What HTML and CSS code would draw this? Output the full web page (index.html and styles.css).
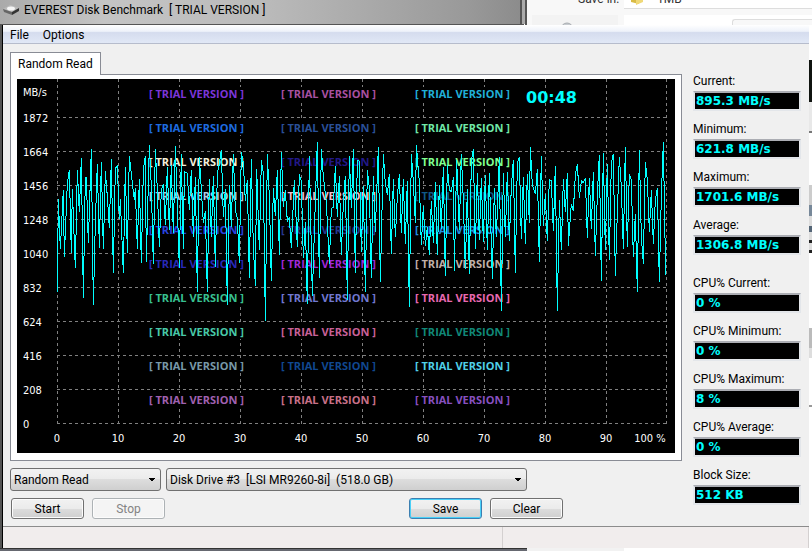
FILE: index.html
```html
<!DOCTYPE html>
<html lang="en">
<head>
<meta charset="utf-8">
<title>EVEREST Disk Benchmark</title>
<link rel="stylesheet" href="styles.css">
</head>
<body>
<div class="desktop">
  <header class="top">
    <div class="titlebar">
      <svg class="drive" viewBox="0 0 16 12" width="16" height="12" aria-hidden="true">
        <path d="M0 5L7 1L16 4L9 9Z" fill="#bbb"/><path d="M0 5L9 8V11L1 8Z" fill="#666"/><path d="M9 8L16 4V7L9 11Z" fill="#333"/><ellipse cx="8" cy="4.500" rx="4" ry="2" fill="#f4f4f4"/>
      </svg>
      <h1 class="title">EVEREST Disk Benchmark&nbsp; [ TRIAL VERSION ]</h1>
    </div>
    <div class="behind">
      <div class="behind-nav">
        <span class="behind-text behind-label">Save in:</span>
        <div class="behind-places"><svg viewBox="0 0 14 14" width="14" height="14" aria-hidden="true"><circle cx="7" cy="7" r="6" fill="#c8ccd0" stroke="#a8acb0"/></svg></div>
      </div>
      <div class="behind-main">
        <div class="behind-field"><svg viewBox="0 0 14 16" width="14" height="16" aria-hidden="true"><path d="M1 1H9V15L1 13Z" fill="#d9bb45"/><path d="M6 3L13 1V13L6 16Z" fill="#f0d978"/></svg><span class="behind-text">1MB</span></div>
        <div class="behind-list"><div class="behind-box"></div></div>
      </div>
    </div>
  </header>

  <main class="window">
    <nav class="menu"><a href="#file">File</a><a href="#options">Options</a></nav>
    <div class="content">
      <div class="left">
        <div class="tabs"><button class="tab" type="button">Random Read</button></div>
        <div class="panel">
          <svg class="plot" viewBox="0 0 658 374" role="img" aria-label="Random read speed">
            <rect width="658" height="374" fill="#000"/>
            <path id="grid" class="grid"/>
            <g id="marks" class="mark"></g>
            <g id="axis" class="axis"></g>
            <text class="clock" x="509" y="24">00:48</text>
            <g class="wave">
              <polyline transform="translate(33 51) scale(.33333)" points="22,485 25,207 31,358 40,180 43,380 49,235 52,160 58,120 64,368 67,178 76,415 82,120 88,247 94,85 100,503 106,142 109,142 115,340 124,57 130,524 136,280 142,102 148,353 154,96 160,358 166,124 172,200 178,293 184,88 190,430 196,115 202,108 208,268 211,208 220,428 226,112 232,368 238,78 247,160 253,210 256,175 262,356 268,148 274,400 280,120 286,78 289,395 298,45 304,170 310,403 316,57 322,180 328,352 334,180 340,163 346,285 352,110 358,300 364,105 370,308 376,48 388,415 394,72 400,358 403,125 412,130 418,240 424,120 430,320 436,142 442,485 448,82"/>
              <polyline transform="translate(183 51) scale(.33333)" points="-2,82 4,178 10,278 16,243 22,485 28,148 34,320 40,138 46,412 52,130 58,102 64,60 70,260 76,178 82,524 88,165 94,290 100,72 106,240 112,265 118,400 124,66 130,100 136,212 142,150 148,443 154,88 160,350 166,467 170,117 178,360 184,90 190,130 196,572 202,72 208,200 214,452 220,175 226,258 232,120 238,374 244,66 250,230 256,180 262,275 268,262 274,353 283,150 292,350 298,132 304,155 310,385 316,277 322,521 328,78 337,497 346,215 352,36 358,443 364,57 370,140 379,215 388,402 394,235 400,232 406,108 412,262 418,138 424,374 430,220 436,138 442,509 448,78 454,235"/>
              <polyline transform="translate(333 51) scale(.33333)" points="4,235 10,57 16,428 22,90 28,93 34,365 40,168 46,485 52,120 58,175 64,443 70,138 76,305 85,51 91,455 100,72 106,160 112,195 118,132 124,371 130,147 136,322 142,200 148,132 154,308 160,147 166,342 172,153 178,530 184,72 190,155 196,278 199,45 208,155 214,345 220,228 226,348 232,292 238,374 244,212 250,340 256,156 262,376 268,165 274,298 280,112 286,437 292,105 298,180 304,185 310,142 313,422 320,90 328,300 334,72 340,210 346,418 352,178 358,431 364,95 370,57 376,356 382,130 388,331 394,145 400,335 406,135 412,360 418,130 427,448 433,175 439,320 448,82 454,542"/>
              <polyline transform="translate(483 51) scale(.33333)" points="4,542 10,130 16,322 22,126 28,332 34,170 40,90 46,428 52,100 58,82 64,328 70,142 76,341 82,132 88,278 91,51 97,165 106,192 112,118 118,395 124,78 130,287 136,192 142,334 148,148 154,153 160,302 166,108 172,542 178,210 184,359 190,147 196,245 202,129 205,347 214,222 220,242 226,135 232,102 238,203 244,153 250,158 256,145 262,323 268,144 274,297 280,126 286,377 292,195 298,75 304,452 310,69 316,360 322,102 328,389 334,100 340,72 346,437 352,250 358,82 364,170 370,356 376,51 382,350 388,132 394,150 400,380 406,252 412,485 418,60 424,320 430,401 436,96 442,150 448,305 454,180 460,341 466,210 472,175 478,455 484,200 490,36 497,434"/>
            </g>
          </svg>
        </div>
        <div class="choices">
          <select class="combo combo-test" aria-label="Test"><option>Random Read</option></select>
          <select class="combo combo-drive" aria-label="Drive"><option>Disk Drive #3&nbsp; [LSI MR9260-8i]&nbsp; (518.0 GB)</option></select>
        </div>
        <div class="actions">
          <button class="btn" type="button">Start</button>
          <button class="btn" type="button" disabled>Stop</button>
          <button class="btn btn-default" type="button">Save</button>
          <button class="btn" type="button">Clear</button>
        </div>
      </div>
      <aside class="stats">
        <div class="stat"><label for="cur">Current:</label><input id="cur" readonly value="895.3 MB/s"></div>
        <div class="stat"><label for="min">Minimum:</label><input id="min" readonly value="621.8 MB/s"></div>
        <div class="stat"><label for="max">Maximum:</label><input id="max" readonly value="1701.6 MB/s"></div>
        <div class="stat"><label for="avg">Average:</label><input id="avg" readonly value="1306.8 MB/s"></div>
        <div class="stat stat-group"><label for="ccur">CPU% Current:</label><input id="ccur" readonly value="0 %"></div>
        <div class="stat"><label for="cmin">CPU% Minimum:</label><input id="cmin" readonly value="0 %"></div>
        <div class="stat"><label for="cmax">CPU% Maximum:</label><input id="cmax" readonly value="8 %"></div>
        <div class="stat"><label for="cavg">CPU% Average:</label><input id="cavg" readonly value="0 %"></div>
        <div class="stat"><label for="blk">Block Size:</label><input id="blk" readonly value="512 KB"></div>
      </aside>
    </div>
    <footer class="status"><div class="status-main"></div><div class="status-side"></div></footer>
  </main>
  <div class="bottom"><div class="bottom-frame"></div><div class="bottom-rest"></div></div>
</div>
<script src="chart.js"></script>
</body>
</html>
```
FILE: styles.css
```css
* { box-sizing: border-box; }
body {
  margin: 0;
  background: #fff;
  color: #000;
  font: 12px/16px Roboto, "Open Sans", sans-serif;
}
.desktop {
  overflow: hidden;
  background: linear-gradient(#fff 60px, #101410 60px 102px, #e8e8e8 102px 131px, #777 131px 133px, #fff 133px 185px, #ccc 185px 205px, #789 205px 216px, #ddd 216px 226px, #567 226px 232px, #ddd 232px 240px, #222 240px 243px, #ddd 243px 250px, #222 250px 253px, #fff 253px 328px, #bbb 328px 348px, #ddd 348px 358px, #fff 358px 405px, #999 405px 407px, #fff 407px);
}
.top { display: grid; grid-template-columns: minmax(0, 527fr) minmax(0, 285fr); height: 25px; }
.titlebar {
  display: flex;
  align-items: flex-start;
  gap: 5px;
  padding: 2px 0 0 3px;
  background: linear-gradient(90deg, #aaa, #c4c4c4 20%, #bbb 50%, #999 90%, #8c8c8c);
  border-right: 7px double #555;
  border-bottom: 1px solid #555;
}
.drive { margin-top: 2px; }
.title { margin: 0; font-size: 12px; font-weight: 400; line-height: 16px; white-space: nowrap; }
.behind { display: grid; grid-template-columns: minmax(0, 97fr) minmax(0, 188fr); background: #f8f8f8; overflow: hidden; }
.behind-nav { overflow: hidden; }
.behind-label { padding-left: 51px; }
.behind-places { height: 10px; margin: 8px 6px 0 5px; padding: 7px 0 0 28px; background: #f3f3f3; overflow: hidden; }
.behind-places svg { display: block; }
.behind-text { display: block; height: 16px; line-height: 16px; margin-top: -9px; color: #333; white-space: nowrap; }
.behind-field { display: flex; gap: 13px; height: 9px; padding-left: 6px; background: #fff; border-bottom: 1px solid #ddd; overflow: hidden; }
.behind-field svg { flex: none; margin-top: -11px; }
.behind-list { height: 10px; margin-top: 6px; padding: 4px 0 0 108px; background: #fff; }
.behind-box { height: 6px; border: 1px solid #ddd; border-width: 1px 0 0 1px; border-radius: 3px 0 0; background: #f8f8f8; }

.window { margin-right: 3px; border-left: 3px solid #555; border-left-style: ridge; background: #f0f0f0; }
.menu {
  display: flex;
  gap: 14px;
  height: 19px;
  padding: 2px 7px 0;
  background: linear-gradient(#fff, #eef2fa 35%, #d5dcee 42%, #e1e8f6);
  border-bottom: 1px solid #b6bccc;
}
.menu a { color: #000; text-decoration: none; }
.content { display: flex; gap: 11px; padding: 8px 8px 7px 7px; }
.left { flex: 1; min-width: 0; }
.tabs { display: flex; height: 22px; }
.tab {
  position: relative;
  height: 23px;
  padding: 0 7px 1px;
  border: 1px solid #898c95;
  border-bottom: 0;
  background: #fff;
  font: inherit;
}
.panel { padding: 4px 6px 7px; border: 1px solid #898c95; background: #fff; }
.plot { display: block; width: 100%; height: auto; }
.grid { fill: none; stroke: #808080; stroke-dasharray: 3 3; shape-rendering: crispEdges; }
.axis { fill: #fff; font: 11px "DejaVu Sans Condensed", "DejaVu Sans", sans-serif; }
.axis .x { text-anchor: middle; }
.mark { font: bold 11px "Open Sans", "Noto Sans", sans-serif; }
.clock { fill: #0ff; font: bold 16px "DejaVu Sans", sans-serif; }
.wave { fill: none; stroke: #0ff; shape-rendering: crispEdges; }
.wave polyline { vector-effect: non-scaling-stroke; }

.choices { display: flex; gap: 5px; margin-top: 7px; }
.combo {
  appearance: none;
  height: 23px;
  padding: 0 20px 0 3px;
  border: 1px solid #707070;
  border-radius: 3px;
  background:
    linear-gradient(225deg, #000 50%, transparent 50%) right 8px top 9px / 4px 4px no-repeat,
    linear-gradient(135deg, #000 50%, transparent 50%) right 4px top 9px / 4px 4px no-repeat,
    linear-gradient(#f2f2f2, #ebebeb 50%, #ddd 50%, #cfcfcf);
  color: #000;
  font: inherit;
}
.combo-test { width: 151px; }
.combo-drive { width: 361px; }
.actions { display: flex; gap: 8px; margin-top: 7px; padding-left: 1px; }
.btn {
  width: 73px;
  height: 21px;
  padding: 0;
  border: 1px solid #707070;
  border-radius: 3px;
  background: linear-gradient(#f2f2f2, #ebebeb 50%, #ddd 50%, #cfcfcf);
  box-shadow: inset 0 0 0 1px #fcfcfc;
  color: #000;
  font: inherit;
}
.btn:disabled { border-color: #adb2b5; background: #f4f4f4; color: #838383; }
.btn-default { margin-left: 236px; border-color: #3c7fb1; box-shadow: inset 0 0 0 1px #48d0f8; }

.stats { width: 108px; padding-top: 21px; }
.stat { margin-bottom: 10px; }
.stat-group { margin-top: 20px; }
.stat label { display: block; height: 18px; white-space: nowrap; }
.stat input {
  display: block;
  width: 100%;
  height: 20px;
  padding: 0 0 0 1px;
  border: 2px solid #e3e6ea;
  border-top-color: #abadb3;
  outline: 0;
  background: #000;
  color: #0ff;
  font: bold 12px "DejaVu Sans", sans-serif;
}
.status { display: flex; height: 22px; border-top: 1px solid #8c8c8c; background: #f1eded; }
.status-main { flex: 500 1 0; border-right: 1px solid #d4d0d0; }
.status-side { flex: 306 1 0; border-right: 1px solid #d4d0d0; }
.bottom { display: flex; height: 3px; }
.bottom-frame { flex: 527 1 0; background: #666870; border-top: 1px solid #333; }
.bottom-rest { flex: 285 1 0; background: linear-gradient(90deg, #f2f2f2 34%, #fff 34%); }
```
FILE: chart.js
```js
const NS = "http://www.w3.org/2000/svg";
const add = (parent, text, x, y, cls, fill) => {
  const t = document.createElementNS(NS, "text");
  t.setAttribute("x", x);
  t.setAttribute("y", y);
  if (cls) t.setAttribute("class", cls);
  if (fill) t.setAttribute("fill", fill);
  t.textContent = text;
  parent.append(t);
};
// Opaque backing that hides the grid behind a mark
const back = (parent, x, y) => {
  const r = document.createElementNS(NS, "rect");
  r.setAttribute("x", x);
  r.setAttribute("y", y);
  r.setAttribute("width", 92);
  r.setAttribute("height", 14);
  parent.append(r);
};
const rows = [38, 72, 106, 140, 174, 208, 242, 276, 310, 344];
const cols = [40, 101, 162, 223, 284, 345, 406, 467, 528, 589, 649];
document.getElementById("grid").setAttribute("d",
  rows.map(y => `M40 ${y}.5H650`).join("") + cols.map(x => `M${x}.5 0V345`).join(""));

const axis = document.getElementById("axis");
add(axis, "MB/s", 6, 17);
[1872, 1664, 1456, 1248, 1040, 832, 624, 416, 208, 0].forEach((v, i) => add(axis, v, 6, 43 + 34 * i));
cols.forEach((x, i) => add(axis, i === 10 ? "100 %" : i * 10, i === 10 ? 633 : x, 363, "x"));

const marks = document.getElementById("marks");
const colors = [
  [132, ["#7b35d8", "#1e6ce0", "#f4efdc", "#b0cce8", "#2a44e0", "#2828b8", "#38c090", "#48c8a8", "#7898a8", "#a060b0"]],
  [264, ["#a850a0", "#2a5098", "#221888", "#f0bcd0", "#283890", "#a028d8", "#7078d0", "#c86098", "#104890", "#c87088"]],
  [398, ["#20b0d8", "#70e8a8", "#80ff90", "#105888", "#2090e0", "#c0b0a8", "#e868b0", "#108878", "#50d0e8", "#8850c0"]]
];
colors.forEach(([x, list]) => list.forEach((c, i) => {
  back(marks, x, 8 + 34 * i);
  add(marks, "[ TRIAL VERSION ]", x, 19 + 34 * i, "", c);
}));
```
